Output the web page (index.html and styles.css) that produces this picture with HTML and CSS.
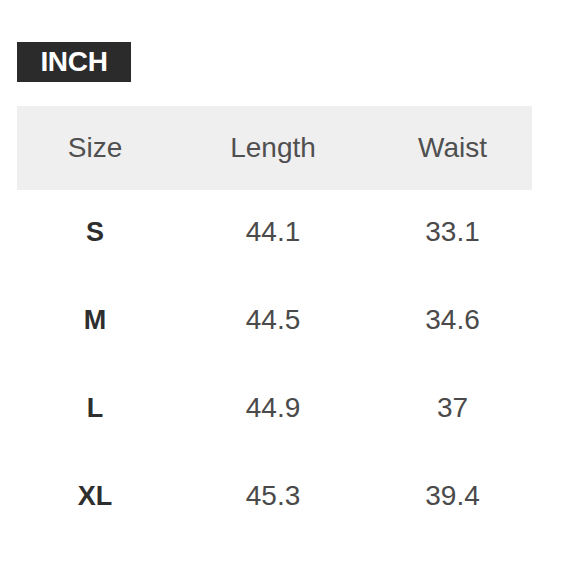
FILE: index.html
```html
<!DOCTYPE html>
<html>
<head>
<meta charset="utf-8">
<link rel="stylesheet" href="styles.css">
</head>
<body>
<div class="page">
  <div class="badge">INCH</div>
  <div class="table">
    <div class="row head">
      <div class="cell">Size</div>
      <div class="cell">Length</div>
      <div class="cell">Waist</div>
    </div>
    <div class="row">
      <div class="cell size">S</div>
      <div class="cell">44.1</div>
      <div class="cell">33.1</div>
    </div>
    <div class="row">
      <div class="cell size">M</div>
      <div class="cell">44.5</div>
      <div class="cell">34.6</div>
    </div>
    <div class="row">
      <div class="cell size">L</div>
      <div class="cell">44.9</div>
      <div class="cell">37</div>
    </div>
    <div class="row">
      <div class="cell size">XL</div>
      <div class="cell">45.3</div>
      <div class="cell">39.4</div>
    </div>
  </div>
</div>
</body>
</html>
```

FILE: styles.css
```css
html, body {
  margin: 0;
  padding: 0;
  background: #ffffff;
}
.page {
  width: 580px;
  height: 580px;
  padding: 42px 0 0 17px;
  box-sizing: border-box;
  font-family: "Liberation Sans", Arial, sans-serif;
}
.badge {
  width: 114px;
  height: 40px;
  background: #2b2b2b;
  color: #ffffff;
  font-weight: bold;
  font-size: 28px;
  line-height: 40px;
  text-align: center;
  letter-spacing: -0.3px;
}
.table {
  margin-top: 24px;
  width: 515px;
}
.row {
  display: grid;
  grid-template-columns: 156px 200px 159px;
  height: 88px;
  box-sizing: border-box;
  padding-bottom: 4px;
  align-items: center;
  color: #4a4a4a;
  font-size: 28px;
}
.row.head {
  height: 84px;
  padding-bottom: 1px;
  background: #efefef;
  color: #505050;
}
.cell {
  text-align: center;
}
.cell.size {
  font-weight: bold;
  color: #2e2e2e;
  font-size: 27px;
}
```
